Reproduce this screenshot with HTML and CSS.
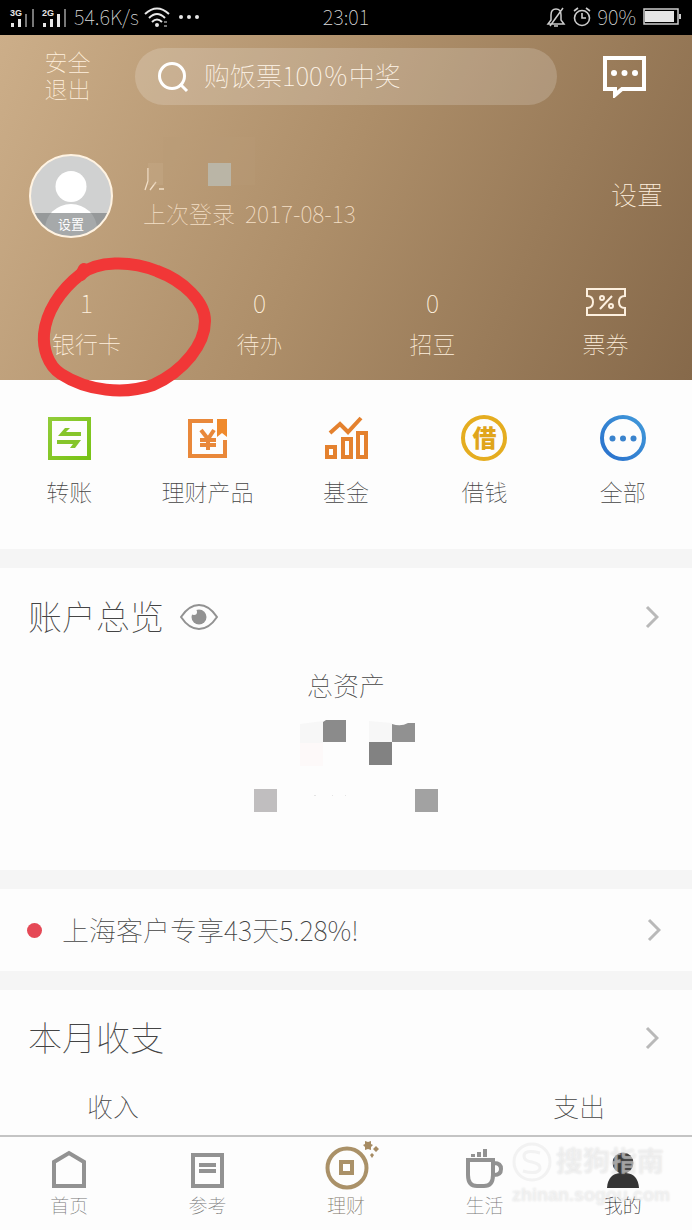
FILE: index.html
```html
<!DOCTYPE html>
<html lang="zh-CN">
<head>
<meta charset="utf-8">
<meta name="viewport" content="width=device-width, initial-scale=1">
<title>我的</title>
<link rel="stylesheet" href="styles.css">
</head>
<body>
<div class="status">
  <div class="status-left">
    <svg width="60" height="24" viewBox="0 0 60 24" aria-label="信号">
      <g fill="#e6e6e6"><text x="1" y="11" class="net">3G</text><text x="33" y="11" class="net">2G</text>
      <path d="M2 18h3v4H2zM9 14h3v8H9zM34 18h3v4h-3zM41 14h3v8h-3zM48 9h3v13h-3z"/></g>
      <path fill="#777" d="M16 9h2v13h-2zM23 4h2v18h-2zM55 4h2v18h-2z"/>
    </svg>
    <span class="speed">54.6K/s</span>
    <svg width="26" height="22" viewBox="0 0 26 22" fill="none" stroke="#e6e6e6" stroke-width="2" aria-label="无线网络">
      <path d="M1 8Q13-3 25 8M5 12q8-8 16 0M8 16q5-5 10 0"/><circle cx="13" cy="19" r="1"/><path d="M20 16h3M20 20h3" stroke-width="1"/>
    </svg>
    <svg class="more" width="22" height="6" fill="#e6e6e6"><circle cx="3" cy="3" r="2"/><circle cx="11" cy="3" r="2"/><circle cx="19" cy="3" r="2"/></svg>
  </div>
  <time>23:01</time>
  <div class="status-right">
    <svg width="20" height="22" viewBox="0 0 20 22" fill="none" stroke="#ccc" stroke-width="1.5" aria-label="静音"><path d="M2 18h16l-3-4V9q0-6-5-6T5 9v5zM8 20h4M17 2L4 20"/></svg>
    <svg width="18" height="20" viewBox="0 0 18 20" fill="none" stroke="#ccc" stroke-width="1.6" aria-label="闹钟"><circle cx="9" cy="11" r="7.5"/><path d="M9 6v5h4M1 4l4-3M17 4l-4-3"/></svg>
    <span>90%</span>
    <svg width="40" height="18" viewBox="0 0 40 18" aria-label="电池"><path d="M1 1h34v15H1z" fill="none" stroke="#ccc" stroke-width="1.5"/><path d="M2 3h29v11H2z" fill="#e6e6e6"/><path d="M36 6h2v5h-2z" fill="#ccc"/></svg>
  </div>
</div>

<header class="hero">
  <div class="topbar">
    <button class="logout">安全<br>退出</button>
    <label class="search">
      <svg width="32" height="32" viewBox="0 0 32 32" fill="none" stroke="#fff" stroke-width="3"><circle cx="15" cy="15" r="12.5"/><path d="M23 23l7 7"/></svg>
      <input type="text" placeholder="购饭票100％中奖" aria-label="搜索">
    </label>
    <button class="message" aria-label="消息">
      <svg width="44" height="42" viewBox="0 0 44 42"><path d="M2 2h39v31H19l-7 6v-6H2z" fill="none" stroke="#fff" stroke-width="4"/><g fill="#fff"><circle cx="11" cy="17" r="3"/><circle cx="21.500" cy="17" r="3"/><circle cx="32" cy="17" r="3"/></g></svg>
    </button>
  </div>

  <div class="profile">
    <button class="avatar" aria-label="头像">
      <svg width="84" height="84" viewBox="0 0 84 84"><defs><clipPath id="face"><circle cx="42" cy="42" r="41"/></clipPath></defs>
        <g clip-path="url(#face)"><path fill="#d0d1d1" d="M0 0h84v84H0z"/><circle cx="42" cy="32.500" r="15.500" fill="#fff"/><ellipse cx="42" cy="75" rx="26" ry="25" fill="#fff"/><path fill="#777b7d" fill-opacity=".65" d="M0 59h84v25H0z"/></g>
        <circle cx="42" cy="42" r="41" fill="none" stroke="#fff3e2" stroke-width="2"/></svg>
      <span>设置</span>
    </button>
    <div class="who">
      <svg width="160" height="60" viewBox="0 0 160 60" aria-label="姓名已隐藏">
        <path d="M20 1h92v48H20z" fill="#b99b76" fill-opacity=".3"/><path d="M65 27h23v23H65z" fill="#bab5a6"/>
        <path d="M5 32v13l-3 9M13 46l-6 8M16 53h5" fill="none" stroke="#f2dfc8" stroke-width="1.3"/>
        <path d="M5 27h15v22H5z" fill="#cbb08d" fill-opacity=".3"/>
      </svg>
      <p><span>上次登录</span><time>2017-08-13</time></p>
    </div>
    <a class="settings" href="#settings">设置</a>
  </div>

  <nav class="stats">
    <a href="#cards"><b>1</b><span>银行卡</span></a>
    <a href="#todo"><b>0</b><span>待办</span></a>
    <a href="#beans"><b>0</b><span>招豆</span></a>
    <a href="#coupons"><b><svg width="40" height="28" viewBox="0 0 40 28" fill="none" stroke="#fdf0df" stroke-width="2"><path d="M1 1h38v7q-6 0-6 6t6 6v7H1v-7q6 0 6-6T1 8zM26 8L14 21"/><circle cx="16" cy="10" r="2"/><circle cx="25" cy="18" r="2"/></svg></b><span>票券</span></a>
  </nav>
  <svg class="marker" width="180" height="146" viewBox="34 254 180 146" fill="none" stroke="#f13737" stroke-width="12" stroke-linecap="round" stroke-linejoin="round" aria-hidden="true"><path d="M81 274C97 261 130 260 157 271C184 281 205 302 205 321C205 344 184 371 153 385C124 395 87 391 61 374C47 365 43 347 44 334C46 313 59 291 81 274"/><path d="M84 269l-3 6" stroke-width="12"/></svg>
</header>

<nav class="shortcuts">
  <a href="#transfer"><svg width="44" height="44" viewBox="0 0 44 44"><defs><linearGradient id="g" x2="1" y2="1"><stop stop-color="#91cc39"/><stop offset="1" stop-color="#78c315"/></linearGradient></defs><path d="M3 3h39v39H3z" fill="none" stroke="url(#g)" stroke-width="4"/><path d="M11 20l7-8h5l-4 4h15v4zM10 24h24l-6 8h-5l3-4H10z" fill="#85c52a"/></svg><span>转账</span></a>
  <a href="#wealth"><svg width="44" height="44" viewBox="0 0 44 44"><g fill="none" stroke="#e9883a" stroke-width="4"><path d="M27 5H4v35h35V24"/><path d="M15 14l7 9 6-9M14 24h16M14 29h16M22 22v12"/></g><path d="M31 3h10v18l-5-4-5 4z" fill="#ef8a2d"/></svg><span>理财产品</span></a>
  <a href="#funds"><svg width="44" height="44" viewBox="0 0 44 44" fill="none" stroke="#e4812e" stroke-width="4"><path d="M3 31h8v10H3zM19 23h8v18h-8zM34 17h8v24h-8zM6 17l10-9 8 8L37 2"/></svg><span>基金</span></a>
  <a href="#loan"><i class="coin">借</i><span>借钱</span></a>
  <a href="#all"><svg width="46" height="46" viewBox="0 0 46 46"><defs><linearGradient id="b" x1="0" y1="1" x2="1" y2="0"><stop stop-color="#2970cc"/><stop offset="1" stop-color="#4199da"/></linearGradient></defs><circle cx="23" cy="23" r="21" fill="none" stroke="url(#b)" stroke-width="4"/><g fill="#3a83cd"><circle cx="12.500" cy="23.500" r="3"/><circle cx="23" cy="23.500" r="3"/><circle cx="33.500" cy="23.500" r="3"/></g></svg><span>全部</span></a>
</nav>

<main class="sections">
  <section class="account">
    <div class="head">
      <h2>账户总览</h2>
      <button class="eye" aria-label="显示金额"><svg width="38" height="26" viewBox="0 0 38 26"><path d="M1 13Q9 1 19 1t18 12Q29 25 19 25T1 13z" fill="none" stroke="#929292" stroke-width="2"/><circle cx="19" cy="13" r="7.500" fill="#929292"/><circle cx="14" cy="8" r="3" fill="#fdfdfd"/></svg></button>
      <svg class="chevron" width="14" height="24" viewBox="0 0 14 24"><path d="M2 2l10 10L2 22"/></svg>
    </div>
    <div class="assets">
      <h3>总资产</h3>
      <svg width="186" height="94" viewBox="0 0 186 94" aria-label="金额已隐藏">
        <path fill="#f7f7f7" d="M47 5l23-3v22H47zM116 2l23 2v20h-23z"/><path fill="#fdf9f9" d="M47 24h23v23H47z"/>
        <path fill="#8b8b8b" d="M70 3l3-2h20v22H70z"/><path fill="#919191" d="M139 5q9 3 16-1h7v19h-23z"/><path fill="#828282" d="M116 23h23v23h-23z"/>
        <path fill="#c0bebf" d="M1 70h23v23H1z"/><path fill="#a2a2a2" d="M162 70h23v23h-23z"/><path fill="#e4e4e4" d="M61 76h2v1h-2zM79 76h1v1h-1zM92 76h1v1h-1z"/>
      </svg>
    </div>
  </section>

  <a class="notice" href="#offer"><span class="dot"></span><span>上海客户专享43天5.28%!</span><svg class="chevron" width="14" height="24" viewBox="0 0 14 24"><path d="M2 2l10 10L2 22"/></svg></a>

  <section class="month">
    <div class="head"><h2>本月收支</h2><svg class="chevron" width="14" height="24" viewBox="0 0 14 24"><path d="M2 2l10 10L2 22"/></svg></div>
    <div class="flow"><span>收入</span><span>支出</span></div>
  </section>
</main>

<footer class="dock">
  <nav class="tabs">
    <a href="#home"><svg width="48" height="48" viewBox="0 0 48 48" fill="none" stroke="#929292" stroke-width="4"><path d="M9 43V19l15-9 15 9v24z"/></svg><span>首页</span></a>
    <a href="#guide"><svg width="48" height="48" viewBox="0 0 48 48" fill="none" stroke="#929292" stroke-width="4"><path d="M9 12h29v31H9zM15 22h17M15 28h17"/></svg><span>参考</span></a>
    <a class="gold" href="#finance"><svg width="64" height="48" viewBox="0 0 64 48"><g fill="none" stroke="#aa9168" stroke-width="4"><circle cx="33" cy="25" r="19.500"/><path d="M27 19h11v11H27z"/></g><path fill="#a68b63" d="M51-2l3 1 3-1v3l2 1-2 2v3l-3-1-3 1V4l-2-2 2-1zM62 3l3 3-3 3-3-3zM58 10l2 2-2 3-2-3z"/></svg><span>理财</span></a>
    <a href="#life"><svg width="48" height="48" viewBox="0 0 48 48" fill="none" stroke="#929292" stroke-width="4"><path d="M8 17h25v15q0 11-9 11h-7Q8 43 8 32zM34 20q7 0 7 6t-7 6"/><path d="M13 11v3M19 9v5M25 6v8"/></svg><span>生活</span></a>
    <a class="current" href="#mine" aria-current="page"><svg width="48" height="48" viewBox="0 0 48 48" fill="#343434"><circle cx="24" cy="20" r="10.500"/><path d="M8 45q1-14 13-15h6q12 1 13 15z"/></svg><span>我的</span></a>
  </nav>
  <div class="watermark">
    <div><svg width="40" height="40" viewBox="0 0 40 40" fill="none" stroke="#eee" stroke-width="3"><circle cx="20" cy="20" r="18"/><path d="M28 11Q12 7 12 14q0 5 8 6 9 2 8 7-3 6-17 2"/></svg><span>搜狗指南</span></div>
    <small>zhinan.sogou.com</small>
  </div>
</footer>
</body>
</html>
```
FILE: styles.css
```css
* { box-sizing: border-box; margin: 0; padding: 0; }

body {
  display: flex;
  flex-direction: column;
  min-height: 100vh;
  background: #fdfdfd;
  color: #444;
  font-family: "Noto Sans CJK SC", "Noto Sans", sans-serif;
  font-size: 23px;
  font-weight: 100;
  line-height: 30px;
}

a { color: inherit; text-decoration: none; }
button, input { border: 0; background: none; color: inherit; font: inherit; }
h2, h3, b { font-weight: inherit; }
svg { flex: none; display: block; }

.status {
  display: grid;
  grid-template-columns: 1fr auto 1fr;
  align-items: center;
  height: 35px;
  padding: 0 9px 2px;
  background: #000;
  color: #ddd;
  font-size: 20px;
}
.status-left, .status-right { display: flex; align-items: center; gap: 5px; }
.status-right { justify-content: flex-end; gap: 7px; }
.more { margin-left: 3px; }
.net { font: bold 9px "Liberation Sans", sans-serif; }

.hero {
  position: relative;
  height: 345px;
  padding-top: 13px;
  background: linear-gradient(115deg, #ccae89 0%, #ad8e69 48%, #86694a 100%);
  color: #fff0de;
}
.topbar {
  display: grid;
  grid-template-columns: 135px 1fr 135px;
  align-items: center;
}
.logout { padding-bottom: 3px; line-height: 27px; }
.message { display: flex; justify-content: center; }
.search {
  display: flex;
  align-items: center;
  gap: 15px;
  height: 57px;
  padding: 0 22px;
  border-radius: 29px;
  background: rgba(255, 255, 255, .18);
}
.search input { flex: 1; min-width: 0; padding-bottom: 4px; font-size: 26px; outline: 0; }
.search input::placeholder { color: #fff6ea; opacity: 1; }

.profile {
  display: flex;
  align-items: center;
  margin-top: 49px;
  padding: 0 29px;
  height: 84px;
}
.avatar { position: relative; width: 84px; height: 84px; }
.avatar span {
  position: absolute;
  inset: auto 0 4px;
  color: #fff;
  font-size: 13px;
  font-weight: 400;
  line-height: 20px;
}
.who { flex: 1; padding-left: 30px; }
.who svg { margin-top: -24px; }
.who p { display: flex; gap: 10px; padding-top: 2px; margin-bottom: 4px; color: #f3dfc6; }
.settings { padding-bottom: 4px; font-size: 26px; }

.stats {
  display: grid;
  grid-template-columns: repeat(4, 1fr);
  margin-top: 49px;
  text-align: center;
}
.stats b, .stats span { display: flex; justify-content: center; align-items: center; height: 30px; }
.stats b { margin-bottom: 11px; font-size: 25px; }
.marker { position: absolute; left: 34px; top: 219px; }

.shortcuts {
  display: grid;
  grid-template-columns: repeat(5, 1fr);
  padding: 34px 0 43px;
}
.shortcuts a { display: flex; flex-direction: column; align-items: center; justify-content: space-between; height: 92px; }
.shortcuts svg { height: 48px; }
.coin {
  width: 46px;
  height: 46px;
  margin-top: 1px;
  border: 4px solid #e5ad20;
  border-radius: 50%;
  color: #e0a51b;
  font-size: 24px;
  font-style: normal;
  font-weight: 900;
  line-height: 36px;
  text-align: center;
}

.sections { flex: 1; }
.account, .notice, .month { border-top: 19px solid #f5f5f5; }
.head { display: flex; align-items: center; padding: 0 33px 0 28px; height: 50px; }
.head h2 { padding-bottom: 2px; font-size: 34px; line-height: 48px; }
.eye { margin-left: 16px; }
.chevron { margin-left: auto; fill: none; stroke: #b9b9b9; stroke-width: 3; }

.account { padding: 24px 0 57px; }
.assets { display: flex; flex-direction: column; align-items: center; padding-top: 28px; }
.assets h3 { margin-bottom: 19px; font-size: 26px; line-height: 30px; }

.notice {
  display: flex;
  align-items: center;
  gap: 20px;
  height: 101px;
  padding: 0 31px 0 27px;
  font-size: 27px;
  line-height: 40px;
}
.dot { width: 15px; height: 15px; border-radius: 50%; background: #e54956; }

.month { padding: 23px 0 12px; }
.flow { display: flex; justify-content: space-between; padding: 28px 87px 0; font-size: 26px; }

.dock { position: sticky; bottom: 0; border-top: 2px solid #c4c4c4; background: #fdfdfd; }
.tabs { display: grid; grid-template-columns: repeat(5, 1fr); padding: 6px 0 12px; }
.tabs a { display: flex; flex-direction: column; align-items: center; color: #777; font-size: 19px; line-height: 27px; }
.tabs svg { overflow: visible; }
.tabs .gold { color: #7c7365; }
.tabs .current { color: #111; }
.watermark {
  position: absolute;
  right: 22px;
  top: 5px;
  color: rgba(255, 255, 255, .4);
  font-family: "Liberation Sans", "Noto Sans CJK SC", sans-serif;
  font-weight: 700;
  text-shadow: 0 0 2px rgba(190, 190, 190, .45);
  pointer-events: none;
}
.watermark div { display: flex; align-items: center; gap: 4px; height: 40px; font-size: 27px; }
.watermark svg { opacity: .7; }
.watermark small { display: block; font-size: 18px; line-height: 26px; }
```
